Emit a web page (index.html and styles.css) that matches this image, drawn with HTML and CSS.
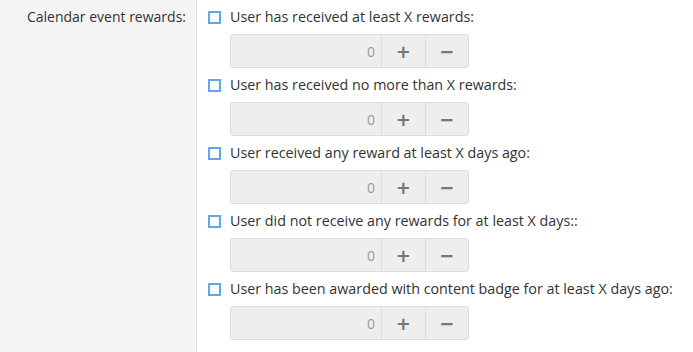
FILE: index.html
```html
<!DOCTYPE html>
<html lang="en">
<head>
    <meta charset="UTF-8">
    <title>Calendar event rewards</title>
    <link rel="stylesheet" href="styles.css">
</head>
<body>
    <div class="form-row">
        <div class="form-label">Calendar event rewards:</div>
        <div class="form-field">
            <!-- condition 1 -->
            <div class="condition">
                <label class="check"><span class="box"></span>User has received at least X rewards:</label>
                <div class="spinner">
                    <input type="text" placeholder="0" disabled>
                    <button type="button">+</button>
                    <button type="button">&minus;</button>
                </div>
            </div>
            <!-- condition 2 -->
            <div class="condition">
                <label class="check"><span class="box"></span>User has received no more than X rewards:</label>
                <div class="spinner">
                    <input type="text" placeholder="0" disabled>
                    <button type="button">+</button>
                    <button type="button">&minus;</button>
                </div>
            </div>
            <!-- condition 3 -->
            <div class="condition">
                <label class="check"><span class="box"></span>User received any reward at least X days ago:</label>
                <div class="spinner">
                    <input type="text" placeholder="0" disabled>
                    <button type="button">+</button>
                    <button type="button">&minus;</button>
                </div>
            </div>
            <!-- condition 4 -->
            <div class="condition">
                <label class="check"><span class="box"></span>User did not receive any rewards for at least X days::</label>
                <div class="spinner">
                    <input type="text" placeholder="0" disabled>
                    <button type="button">+</button>
                    <button type="button">&minus;</button>
                </div>
            </div>
            <!-- condition 5 -->
            <div class="condition">
                <label class="check"><span class="box"></span>User has been awarded with content badge for at least X days ago:</label>
                <div class="spinner">
                    <input type="text" placeholder="0" disabled>
                    <button type="button">+</button>
                    <button type="button">&minus;</button>
                </div>
            </div>
        </div>
    </div>
</body>
</html>
```

FILE: styles.css
```css
body {
    margin: 0;
    font-family: "Open Sans", "Liberation Sans", sans-serif;
    font-size: 14px;
    color: #333;
    background-color: #fff;
}
.form-row {
    display: grid;
    grid-template-columns: 197px 1fr;
    min-height: 352px;
}
.form-label {
    background-color: #f4f4f4;
    border-right: 1px solid #e3e3e3;
    text-align: right;
    padding: 7px 10px 0 0;
    line-height: 20px;
}
.form-field {
    padding: 7px 0 0 11px;
    font-size: 14.3px;
}
.condition {
    margin-bottom: 7px;
}
.check {
    display: flex;
    align-items: center;
    height: 20px;
    line-height: 20px;
}
.box {
    width: 9px;
    height: 9px;
    border: 2px solid #62a8e8;
    background: #fff;
    margin-right: 9px;
    flex-shrink: 0;
}
.spinner {
    display: flex;
    width: 239px;
    height: 34px;
    margin: 7px 0 0 22px;
    border: 1px solid #dcdcdc;
    border-radius: 3px;
    background-color: #eeeeee;
    box-sizing: border-box;
}
.spinner input {
    width: 150px;
    border: none;
    background: transparent;
    text-align: right;
    padding: 0 6px;
    box-sizing: border-box;
    font-family: inherit;
    font-size: 14px;
}
.spinner input::placeholder {
    color: #9a9a9a;
}
.spinner button {
    width: 44px;
    border: none;
    border-left: 1px solid #dcdcdc;
    background: transparent;
    color: #777;
    font-family: "DejaVu Sans", sans-serif;
    font-size: 18px;
    font-weight: bold;
    padding: 0;
}
```
